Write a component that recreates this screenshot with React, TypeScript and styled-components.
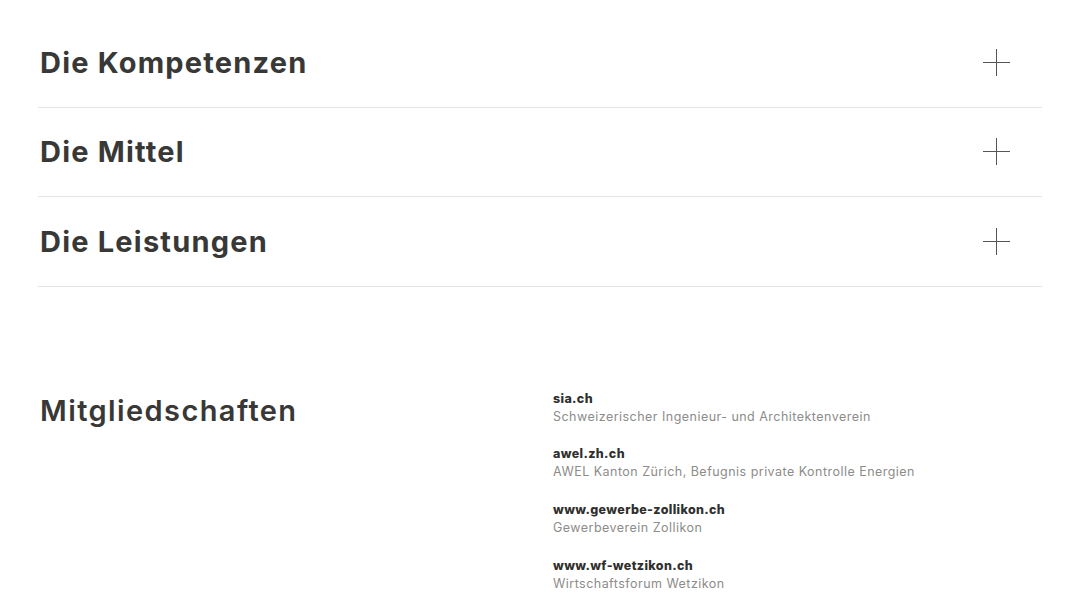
import React from "react";
import styled, { createGlobalStyle } from "styled-components";

const Global = createGlobalStyle`
  html, body { margin: 0; padding: 0; background: #fff; }
  body { font-family: Inter, "Noto Sans", sans-serif; color: #383836; }
`;

const Page = styled.div`
  padding: 18px 38px 0 38px;
  height: 593px;
  box-sizing: border-box;
  overflow: hidden;
`;

const Accordion = styled.div`
  display: flex;
  flex-direction: column;
`;

const Row = styled.div`
  display: flex;
  align-items: center;
  justify-content: space-between;
  height: 88.5px;
  border-bottom: 1px solid #e4e4e2;
  padding: 0 32px 0 2px;
`;

const Title = styled.h2`
  margin: 0;
  font-size: 29px;
  font-weight: 700;
  letter-spacing: 1.2px;
  color: #383836;
`;

const PlusIcon = styled.svg`
  width: 27px;
  height: 27px;
  display: block;
`;

const Members = styled.section`
  display: grid;
  grid-template-columns: 515px 1fr;
  margin-top: 103px;
`;

const MembersTitle = styled.h2`
  margin: 3px 0 0 2px;
  font-size: 29px;
  font-weight: 600;
  letter-spacing: 1.4px;
  color: #383836;
`;

const List = styled.div`
  display: flex;
  flex-direction: column;
  gap: 19.8px;
`;

const Item = styled.div`
  display: flex;
  flex-direction: column;
  line-height: 18px;
`;

const Link = styled.span`
  font-size: 12.5px;
  font-weight: 800;
  letter-spacing: 0.35px;
  color: #2f2f2d;
`;

const Desc = styled.span`
  font-size: 12.5px;
  color: #8c8c8a;
  letter-spacing: 0.47px;
`;

const Plus = () => (
  <PlusIcon viewBox="0 0 27 27">
    <path d="M13.5 0V27M0 13.5H27" stroke="#555" strokeWidth="1" fill="none" />
  </PlusIcon>
);

const sections = ["Die Kompetenzen", "Die Mittel", "Die Leistungen"];

const members = [
  ["sia.ch", "Schweizerischer Ingenieur- und Architektenverein"],
  ["awel.zh.ch", "AWEL Kanton Zürich, Befugnis private Kontrolle Energien"],
  ["www.gewerbe-zollikon.ch", "Gewerbeverein Zollikon"],
  ["www.wf-wetzikon.ch", "Wirtschaftsforum Wetzikon"],
];

export default function App() {
  return (
    <>
      <Global />
      <Page>
        <Accordion>
          {sections.map((s) => (
            <Row key={s}>
              <Title>{s}</Title>
              <Plus />
            </Row>
          ))}
        </Accordion>
        <Members>
          <MembersTitle>Mitgliedschaften</MembersTitle>
          <List>
            {members.map(([l, d]) => (
              <Item key={l}>
                <Link>{l}</Link>
                <Desc>{d}</Desc>
              </Item>
            ))}
          </List>
        </Members>
      </Page>
    </>
  );
}
